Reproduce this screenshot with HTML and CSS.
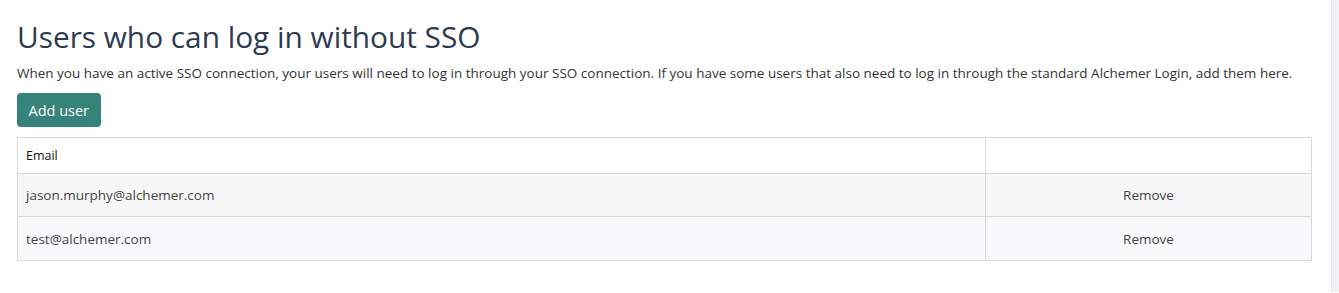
FILE: index.html
```html
<!DOCTYPE html>
<html>
  <head>
    <meta name="viewport" content="width=device-width, initial-scale=1.0" />
    <link rel="stylesheet" href="styles.css">
  </head>

  <body>
    <div class="page">
      <div class="content">
        <h1 class="title">Users who can log in without SSO</h1>
        <p class="intro">When you have an active SSO connection, your users will need to log in through your SSO connection. If you have some users that also need to log in through the standard Alchemer Login, add them here.</p>
        <button class="btn-add" type="button">Add user</button>
        <table class="user-table">
          <thead>
            <tr>
              <th class="col-email">Email</th>
              <th class="col-action"></th>
            </tr>
          </thead>
          <tbody>
            <tr>
              <td>jason.murphy@alchemer.com</td>
              <td class="cell-action">Remove</td>
            </tr>
            <tr class="row-alt">
              <td>test@alchemer.com</td>
              <td class="cell-action">Remove</td>
            </tr>
          </tbody>
        </table>
      </div>
      <div class="side-strip"></div>
    </div>
  </body>
</html>
```

FILE: styles.css
```css
html,
body {
  margin: 0;
  padding: 0;
  background: #fff;
}

body {
  font-family: "Open Sans", "Noto Sans", Arial, sans-serif;
  color: #333;
}

.page {
  display: flex;
  height: 293px;
}

.content {
  flex: 1;
  min-width: 0;
  padding: 17px 19px 0 17px;
}

/* light gutter at the right edge */
.side-strip {
  flex: 0 0 7px;
  height: 292px;
  background: #f0f2f6;
  border-left: 1px solid #e4e8ee;
}

.title {
  margin: 0;
  font-size: 29.8px;
  font-weight: 400;
  line-height: 40px;
  color: #2e3b4e;
}

.intro {
  margin: 6px 0 0;
  font-size: 13.5px;
  line-height: 20px;
  color: #333;
}

.btn-add {
  margin-top: 10px;
  height: 34px;
  padding: 0 11.5px;
  border: 0;
  border-radius: 4px;
  background: #36837b;
  color: #fff;
  font-family: inherit;
  font-size: 14.5px;
  cursor: pointer;
}

.user-table {
  margin-top: 10px;
  width: 100%;
  border-collapse: collapse;
  font-size: 13.5px;
}

.user-table th,
.user-table td {
  border: 1px solid #d9d9d9;
  padding: 0 8px;
  text-align: left;
}

.user-table th {
  height: 35px;
  font-size: 12.5px;
  font-weight: 400;
  color: #111;
  background: #fff;
}

.user-table td {
  height: 42px;
  color: #444;
  background: #f7f7f7;
}

.user-table .row-alt td {
  height: 43px;
  background: #f8f9fa;
}

.col-email {
  width: 951px;
}

.user-table .cell-action {
  text-align: center;
}
```
